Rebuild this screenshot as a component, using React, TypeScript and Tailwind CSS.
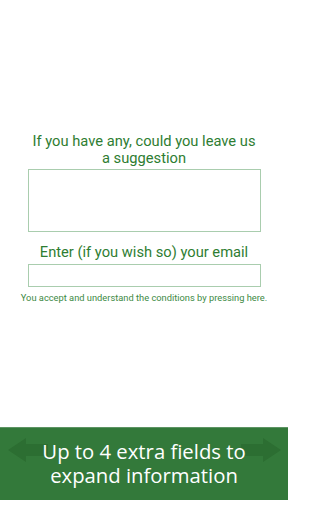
import React from "react";

function Arrow({ dir }: { dir: "left" | "right" }) {
  return (
    <svg viewBox="0 0 40 24" className="w-[40px] h-[24px]" fill="#2c6e32" style={{ filter: "blur(0.6px)" }}>
      {dir === "left" ? (
        <path d="M0 12 L18 0 L18 6 L40 6 L40 18 L18 18 L18 24 Z" />
      ) : (
        <path d="M40 12 L22 0 L22 6 L0 6 L0 18 L22 18 L22 24 Z" />
      )}
    </svg>
  );
}

export default function App() {
  return (
    <div className="w-[288px] h-[512px] bg-white flex flex-col" style={{ fontFamily: "Roboto, sans-serif" }}>
      <div className="h-[133px]" />
      <div className="flex flex-col items-center text-[#2e7d32]">
        <p className="text-[14.7px] leading-[17px] text-center px-2">
          If you have any, could you leave us
          <br />a suggestion
        </p>
        <div className="mt-[2px] w-[233px] h-[63px] border border-[#a9cdae]" />
        <p className="mt-[12px] text-[14.7px] leading-[17px]">Enter (if you wish so) your email</p>
        <div className="mt-[3px] w-[233px] h-[23px] border border-[#a9cdae]" />
        <p className="mt-[5px] text-[9.3px] leading-[11px] text-[#3d8a44] whitespace-nowrap">
          You accept and understand the conditions by pressing here.
        </p>
      </div>
      <div className="flex-1" />
      <div className="mb-[12px] h-[73px] bg-[#33793a] border-t border-[#5d9463] relative flex flex-col items-center justify-center pb-[3px]">
        <div className="absolute left-[8px] top-[10px]">
          <Arrow dir="left" />
        </div>
        <div className="absolute right-[7px] top-[10px]">
          <Arrow dir="right" />
        </div>
        <div
          className="relative flex flex-col items-center text-white text-[20.3px] leading-[24px]"
          style={{ fontFamily: "'Open Sans', sans-serif" }}
        >
          <span>Up to 4 extra fields to</span>
          <span>expand information</span>
        </div>
      </div>
    </div>
  );
}
